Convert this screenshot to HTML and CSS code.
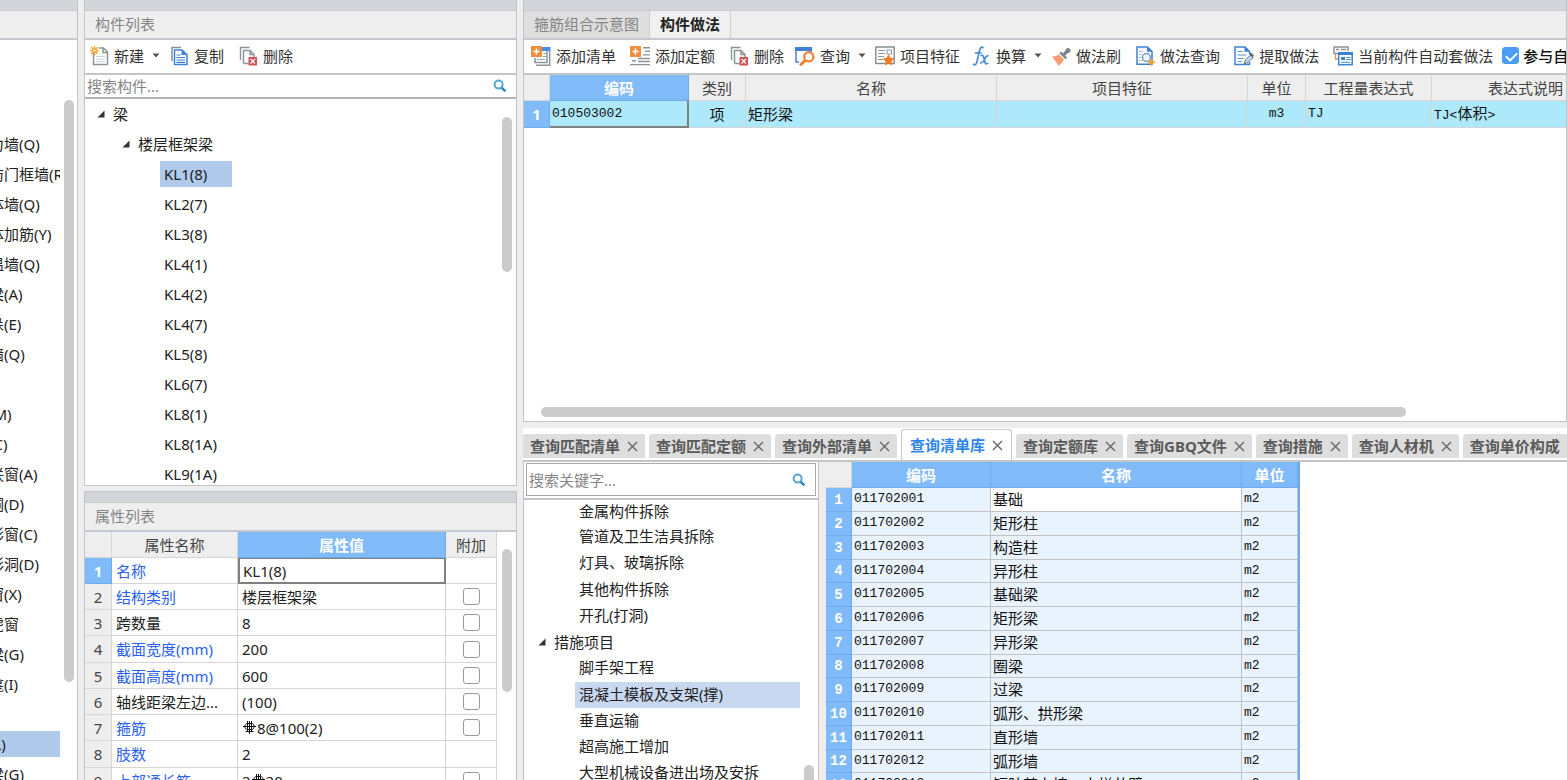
FILE: index.html
```html
<!DOCTYPE html>
<html lang="zh-CN">
<head>
<meta charset="utf-8">
<title>构件做法</title>
<link rel="stylesheet" href="styles.css">
</head>
<body>
<svg class="defs" aria-hidden="true">
  <symbol id="i-search" viewBox="0 0 14 14"><circle cx="5.6" cy="5.6" r="4" fill="#fff" stroke="#5aa5d2" stroke-width="2"/><path d="M8.6 8.6l3.8 3.8" stroke="#2f88c0" stroke-width="2.6"/></symbol>
  <symbol id="i-close" viewBox="0 0 11 11"><path d="M1 1l9 9M10 1l-9 9" stroke="#666" stroke-width="1.4" fill="none"/></symbol>
  <symbol id="i-tri" viewBox="0 0 8 8"><path d="M7.5 .5v7h-7z" fill="#333"/></symbol>
  <symbol id="i-caret" viewBox="0 0 8 5"><path d="M.5.5h7L4 4.5z" fill="#555"/></symbol>
  <symbol id="i-rebar" viewBox="0 0 13 13"><path d="M4.500 0v10.500M8.500 0v10.500M6.500 0v13M0 5.500h13M2.500 10.500h8" stroke="#111" fill="none"/><path d="M4.500 2.500C1 2.500 1 8.500 4.500 8.500M8.500 2.500c3.500 0 3.500 6 0 6M4.500 2.500h4M4.500 8.500h4" fill="none" stroke="#111"/></symbol>
  <symbol id="i-delete" viewBox="0 0 20 20"><path d="M2.500 14V1.500h9" fill="none" stroke="#8a9499" stroke-width="1.400"/><path d="M5.500 17.500V4.500h6.500l4 4v4M12 4.500v4h4M5.500 17.500h5" fill="none" stroke="#8a9499" stroke-width="1.500"/><rect x="10.500" y="11" width="8.500" height="8.500" fill="#d05358"/><path d="M12.500 13l4.500 4.500M17 13l-4.500 4.500" stroke="#fff" stroke-width="1.200"/></symbol>
</svg>
<div class="app">
  <aside class="col">
    <section class="panel modules">
      <div class="strip"></div>
      <div class="head"></div>
      <div class="scroller">
        <ul class="module-list">
          <li></li><li></li><li></li><li>剪力墙(Q)</li><li>人防门框墙(RF)</li><li>砌体墙(Q)</li><li>砌体加筋(Y)</li><li>保温墙(Q)</li><li>暗梁(A)</li><li>墙垛(E)</li><li>幕墙(Q)</li><li></li><li>门(M)</li><li>窗(C)</li><li>门联窗(A)</li><li>墙洞(D)</li><li>带形窗(C)</li><li>带形洞(D)</li><li>飘窗(X)</li><li>老虎窗</li><li>过梁(G)</li><li>壁龛(I)</li><li></li><li class="on">梁(L)</li><li>连梁(G)</li>
        </ul>
        <div class="vbar vbar-modules"></div>
      </div>
    </section>
  </aside>

  <div class="col middle">
    <section class="panel">
      <div class="strip"></div>
      <h2 class="head">构件列表</h2>
      <div class="toolbar">
        <button class="tool drop"><svg class="ico" viewBox="0 0 20 20"><path d="M4.500 7v11.500h14V6l-4-4H10" fill="#fff" stroke="#8a9499" stroke-width="1.500"/><path d="M14 2v4.500h4.500" fill="none" stroke="#8a9499" stroke-width="1.500"/><path d="M7 10.500h9M7 13h9M7 15.500h9" stroke="#ccd2d6"/><path d="M5.500 0v9M1 4.500h9M2.300 1.300l6.400 6.400M8.700 1.300L2.300 7.700" stroke="#f7a133" stroke-width="1.500"/><circle cx="5.500" cy="4.500" r="1.300" fill="#fff3c0"/></svg>新建<svg class="caret"><use href="#i-caret"/></svg></button>
        <button class="tool"><svg class="ico" viewBox="0 0 20 20"><path d="M3 15V1.500h9" fill="none" stroke="#7d93a8" stroke-width="1.500"/><path d="M5.500 4h7.500l5 4.500v10H5.500z" fill="#fff" stroke="#3d82d2" stroke-width="1.500"/><path d="M12.500 4v5H18z" fill="#3d82d2"/><path d="M7.500 9h4M7.500 11.500h8.500M7.500 14h8.500M7.500 16.300h8.500" stroke="#3d82d2" stroke-width="1.200"/></svg>复制</button>
        <button class="tool"><svg class="ico"><use href="#i-delete"/></svg>删除</button>
      </div>
      <label class="search"><input type="text" placeholder="搜索构件..." aria-label="搜索构件"><svg class="mag"><use href="#i-search"/></svg></label>
      <div class="scroller">
        <ul class="tree parts">
          <li class="lv0"><svg class="tri"><use href="#i-tri"/></svg>梁</li>
          <li class="lv1"><svg class="tri"><use href="#i-tri"/></svg>楼层框架梁</li>
          <li class="lv2"><span class="on">KL1(8)</span></li><li class="lv2"><span>KL2(7)</span></li><li class="lv2"><span>KL3(8)</span></li><li class="lv2"><span>KL4(1)</span></li><li class="lv2"><span>KL4(2)</span></li><li class="lv2"><span>KL4(7)</span></li><li class="lv2"><span>KL5(8)</span></li><li class="lv2"><span>KL6(7)</span></li><li class="lv2"><span>KL8(1)</span></li><li class="lv2"><span>KL8(1A)</span></li><li class="lv2"><span>KL9(1A)</span></li>
        </ul>
        <div class="vbar vbar-parts"></div>
      </div>
    </section>
    <section class="panel topped">
      <div class="strip"></div>
      <h2 class="head">属性列表</h2>
      <div class="scroller">
        <table class="props">
          <colgroup><col class="c-num"><col class="c-key"><col><col class="c-add"></colgroup>
          <thead><tr><th></th><th>属性名称</th><th class="sel">属性值</th><th>附加</th></tr></thead>
          <tbody>
            <tr><th class="sel">1</th><td class="link">名称</td><td class="focus">KL1(8)</td><td></td></tr>
            <tr><th>2</th><td class="link">结构类别</td><td>楼层框架梁</td><td class="tick"><input type="checkbox" aria-label="附加 结构类别"></td></tr>
            <tr><th>3</th><td>跨数量</td><td>8</td><td class="tick"><input type="checkbox" aria-label="附加 跨数量"></td></tr>
            <tr><th>4</th><td class="link">截面宽度(mm)</td><td>200</td><td class="tick"><input type="checkbox" aria-label="附加 截面宽度"></td></tr>
            <tr><th>5</th><td class="link">截面高度(mm)</td><td>600</td><td class="tick"><input type="checkbox" aria-label="附加 截面高度"></td></tr>
            <tr><th>6</th><td>轴线距梁左边...</td><td>(100)</td><td class="tick"><input type="checkbox" aria-label="附加 轴线距梁左边"></td></tr>
            <tr><th>7</th><td class="link">箍筋</td><td><svg class="rebar"><use href="#i-rebar"/></svg>8@100(2)</td><td class="tick"><input type="checkbox" aria-label="附加 箍筋"></td></tr>
            <tr><th>8</th><td class="link">肢数</td><td>2</td><td></td></tr>
            <tr><th>9</th><td class="link">上部通长筋</td><td>2<svg class="rebar"><use href="#i-rebar"/></svg>20</td><td class="tick"><input type="checkbox" aria-label="附加 上部通长筋"></td></tr>
          </tbody>
        </table>
        <div class="vbar vbar-props"></div>
      </div>
    </section>
  </div>

  <main class="col right">
    <section class="panel">
      <div class="strip"></div>
      <div class="head head-tabs"><button class="htab">箍筋组合示意图</button><button class="htab current">构件做法</button></div>
      <div class="toolbar">
        <button class="tool"><svg class="ico" viewBox="0 0 20 20"><path d="M10 1h9.500v4H10z" fill="#3f8fe8"/><path d="M18.700 5v14.200H5M4 12v4.500h12V5" fill="none" stroke="#8a9499" stroke-width="1.500"/><path d="M12 7.500h3M6 13.500h8M12 10.500h3" stroke="#9aa4a9"/><rect width="11" height="11" fill="#ee8f3f"/><path d="M5.500 2.500v6M2.500 5.500h6" stroke="#fff" stroke-width="1.500"/></svg>添加清单</button>
        <button class="tool"><svg class="ico" viewBox="0 0 20 20"><path d="M13 1.700h7M15 5.300h5M13 8.900h7M8 12.500h12M2 14.700h4M8 15.500h12M0 18.600h20" stroke="#8a9499" stroke-width="1.400"/><rect width="11" height="11" fill="#ee8f3f"/><path d="M5.500 2.500v6M2.500 5.500h6" stroke="#fff" stroke-width="1.500"/></svg>添加定额</button>
        <button class="tool"><svg class="ico"><use href="#i-delete"/></svg>删除</button>
        <button class="tool drop"><svg class="ico" viewBox="0 0 20 20"><path d="M0 1h17v4H0z" fill="#3f82d8"/><path d="M1 3v13h3M16 3v3" fill="none" stroke="#3f82d8" stroke-width="1.500"/><circle cx="13.800" cy="10.800" r="4.600" fill="#fff" stroke="#f08033" stroke-width="2.200"/><path d="M10.300 14.300L5 19.300" stroke="#f08033" stroke-width="3"/></svg>查询<svg class="caret"><use href="#i-caret"/></svg></button>
        <button class="tool"><svg class="ico" viewBox="0 0 20 20"><rect x=".8" y="1" width="18.400" height="16.500" fill="#fff" stroke="#7f898e" stroke-width="1.400"/><path d="M3 4.500h7M3 7.500h7M3 10.500h6M3 13.500h5" stroke="#8a9499" stroke-width="1.200"/><rect x="12" y="4" width="4.500" height="4" fill="none" stroke="#8a9499"/><path d="M13.500 8l1.800 3.800 4.200.6-3 2.900.7 4.200-3.700-2-3.700 2 .7-4.200-3-2.900 4.200-.6z" fill="#f07c22"/></svg>项目特征</button>
        <button class="tool drop"><svg class="ico" viewBox="0 0 20 20"><path d="M12.500 2.200C10.300-.2 9 2 8.300 5L6 15.500c-.7 3.300-2 4-4 2.500M3.800 7h7" fill="none" stroke="#4088d8" stroke-width="1.600"/><path d="M9.500 9.800c2.500-1.500 3 0 3.800 3.700s1.300 5.700 4 3.500M17.500 9.500c-2.500 0-3.500 3.200-4.500 4.800s-2 3.200-4 2.700" fill="none" stroke="#4088d8" stroke-width="1.600"/></svg>换算<svg class="caret"><use href="#i-caret"/></svg></button>
        <button class="tool"><svg class="ico" viewBox="0 0 20 20"><path d="M1 10c3 1 5-.5 7-1.500l5 5C11.500 16 10 18 7.500 19.700z" fill="#f99b73"/><path d="M8.300 7.200l1.800-1.800 6 6-1.800 1.800z" fill="#7b878c"/><path d="M12.500 9L16 5.500" stroke="#7b878c" stroke-width="3.200"/><circle cx="17" cy="4.500" r="2.500" fill="#7b878c"/></svg>做法刷</button>
        <button class="tool"><svg class="ico" viewBox="0 0 20 20"><path d="M2 1h10.500L17 5.500v12.800H2z" fill="#fff" stroke="#3d82d2" stroke-width="1.500"/><path d="M12 .5v5.300h5.500z" fill="#3d82d2"/><path d="M4 5.500h4M4 8.500h3M4 11.500h3M4 14.500h5" stroke="#a8bfd8"/><circle cx="11.500" cy="11.500" r="4" fill="#eef5ff" stroke="#7c9cd0" stroke-width="1.500"/><path d="M16.500 13l1 2.300 2.300 1-2.300 1-1 2.400-1-2.400-2.300-1 2.300-1z" fill="#f5a020" stroke="#f5a020"/></svg>做法查询</button>
        <button class="tool"><svg class="ico" viewBox="0 0 20 20"><path d="M15.500 16v2.500H1V1h10l4.500 4.500V8" fill="#fff" stroke="#3d82d2" stroke-width="1.500"/><path d="M10.500.5v5.300H16z" fill="#3d82d2"/><path d="M3.500 5.500h5M3.500 9h9M3.500 12.500h6M3.500 15.500h4" stroke="#5f93cf"/><path d="M10 18l1.500-4 5-5 2.500 2.500-5 5z" fill="#b9dff0" stroke="#607078"/><path d="M15 8l2-1.500 3 3-1.500 2z" fill="#606b70"/></svg>提取做法</button>
        <button class="tool"><svg class="ico" viewBox="0 0 20 20"><path d="M5 7.500H1V1h14v4M3 3.500h3M8 3.500h5" fill="none" stroke="#8a9499" stroke-width="1.500"/><path d="M2.500 8v5h3" fill="none" stroke="#ef8a45" stroke-width="1.300"/><rect x="5.700" y="6.700" width="13.500" height="12" fill="#fff" stroke="#3d82d2" stroke-width="1.500"/><path d="M6 8h13" stroke="#3d82d2" stroke-width="2"/><rect x="8" y="11" width="4" height="3" fill="#3d82d2"/><path d="M13.500 11.500h4M13.500 13.500h4M8 16.300h9" stroke="#3d82d2"/></svg>当前构件自动套做法</button>
        <label class="auto"><input type="checkbox" checked>参与自动套</label>
      </div>
      <div class="sheet">
        <table class="method">
          <colgroup><col class="m-num"><col class="m-code"><col class="m-kind"><col class="m-name"><col class="m-name"><col class="m-unit"><col class="m-expr"><col class="m-desc"></colgroup>
          <thead><tr><th></th><th class="sel">编码</th><th>类别</th><th>名称</th><th>项目特征</th><th>单位</th><th>工程量表达式</th><th>表达式说明</th></tr></thead>
          <tbody><tr><th class="sel">1</th><td class="mono focus">010503002</td><td class="mid">项</td><td>矩形梁</td><td></td><td class="mono mid">m3</td><td class="mono">TJ</td><td class="mono">TJ&lt;<span class="cjk">体积</span>&gt;</td></tr></tbody>
        </table>
      </div>
      <div class="hbar"></div>
    </section>

    <section class="query">
      <nav class="qtabs">
        <div class="qtab"><button>查询匹配清单</button><button class="x" aria-label="关闭"><svg><use href="#i-close"/></svg></button></div>
        <div class="qtab"><button>查询匹配定额</button><button class="x" aria-label="关闭"><svg><use href="#i-close"/></svg></button></div>
        <div class="qtab"><button>查询外部清单</button><button class="x" aria-label="关闭"><svg><use href="#i-close"/></svg></button></div>
        <div class="qtab current"><button>查询清单库</button><button class="x" aria-label="关闭"><svg><use href="#i-close"/></svg></button></div>
        <div class="qtab"><button>查询定额库</button><button class="x" aria-label="关闭"><svg><use href="#i-close"/></svg></button></div>
        <div class="qtab"><button>查询GBQ文件</button><button class="x" aria-label="关闭"><svg><use href="#i-close"/></svg></button></div>
        <div class="qtab"><button>查询措施</button><button class="x" aria-label="关闭"><svg><use href="#i-close"/></svg></button></div>
        <div class="qtab"><button>查询人材机</button><button class="x" aria-label="关闭"><svg><use href="#i-close"/></svg></button></div>
        <div class="qtab"><button>查询单价构成</button><button class="x" aria-label="关闭"><svg><use href="#i-close"/></svg></button></div>
      </nav>
      <div class="qbody">
        <div class="lib">
          <div class="lib-search"><label class="search boxed"><input type="text" placeholder="搜索关键字..." aria-label="搜索关键字"><svg class="mag"><use href="#i-search"/></svg></label></div>
          <div class="scroller">
            <ul class="tree chapters">
              <li><span>金属构件拆除</span></li><li><span>管道及卫生洁具拆除</span></li><li><span>灯具、玻璃拆除</span></li><li><span>其他构件拆除</span></li><li><span>开孔(打洞)</span></li>
              <li class="group"><svg class="tri"><use href="#i-tri"/></svg>措施项目</li>
              <li><span>脚手架工程</span></li><li><span class="on">混凝土模板及支架(撑)</span></li><li><span>垂直运输</span></li><li><span>超高施工增加</span></li><li><span>大型机械设备进出场及安拆</span></li>
            </ul>
            <div class="vbar vbar-lib"></div>
          </div>
        </div>
        <div class="result">
          <table class="items">
            <colgroup><col class="m-num"><col class="m-code"><col class="m-name"><col class="i-unit"></colgroup>
            <thead><tr><th class="corner"></th><th>编码</th><th>名称</th><th>单位</th></tr></thead>
            <tbody>
              <tr><th>1</th><td class="mono">011702001</td><td class="cur">基础</td><td class="mono">m2</td></tr>
              <tr><th>2</th><td class="mono">011702002</td><td>矩形柱</td><td class="mono">m2</td></tr>
              <tr><th>3</th><td class="mono">011702003</td><td>构造柱</td><td class="mono">m2</td></tr>
              <tr><th>4</th><td class="mono">011702004</td><td>异形柱</td><td class="mono">m2</td></tr>
              <tr><th>5</th><td class="mono">011702005</td><td>基础梁</td><td class="mono">m2</td></tr>
              <tr><th>6</th><td class="mono">011702006</td><td>矩形梁</td><td class="mono">m2</td></tr>
              <tr><th>7</th><td class="mono">011702007</td><td>异形梁</td><td class="mono">m2</td></tr>
              <tr><th>8</th><td class="mono">011702008</td><td>圈梁</td><td class="mono">m2</td></tr>
              <tr><th>9</th><td class="mono">011702009</td><td>过梁</td><td class="mono">m2</td></tr>
              <tr><th>10</th><td class="mono">011702010</td><td>弧形、拱形梁</td><td class="mono">m2</td></tr>
              <tr><th>11</th><td class="mono">011702011</td><td>直形墙</td><td class="mono">m2</td></tr>
              <tr><th>12</th><td class="mono">011702012</td><td>弧形墙</td><td class="mono">m2</td></tr>
              <tr><th>13</th><td class="mono">011702013</td><td>短肢剪力墙、电梯井壁</td><td class="mono">m2</td></tr>
            </tbody>
          </table>
        </div>
      </div>
    </section>
  </main>
</div>
</body>
</html>
```
FILE: styles.css
```css
* { box-sizing: border-box; }
body {
  margin: 0;
  overflow: hidden;
  background: #eee;
  color: #222;
  font: 15px/20px "Noto Sans", "Noto Sans CJK SC", sans-serif;
}
button {
  margin: 0;
  padding: 0;
  border: 0;
  background: none;
  color: inherit;
  font: inherit;
  white-space: nowrap;
}
ul { list-style: none; margin: 0; padding: 0; }
.defs { position: absolute; width: 0; height: 0; }

.app {
  display: grid;
  grid-template-columns: 78px 433px minmax(0, 1fr);
  gap: 6px;
  height: 100vh;
}
.col { display: grid; min-width: 0; min-height: 0; overflow: hidden; }
.middle { grid-template-rows: minmax(0, 486fr) minmax(0, 289fr); gap: 5px; }
.right { grid-template-rows: minmax(0, 422fr) minmax(0, 352fr); gap: 6px; }

.panel {
  display: flex;
  flex-direction: column;
  min-width: 0;
  min-height: 0;
  overflow: hidden;
  background: #fff;
  border: solid #c2c4c8;
  border-width: 0 1px 1px;
}
.modules { border-width: 0 1px 0 0; }
.topped { border-width: 1px 1px 0; }
.strip { flex: none; height: 11px; background: #d3d5db; border-bottom: 1px solid #c8cbd0; }
.head {
  flex: none;
  height: 29px;
  margin: 0;
  padding: 3px 10px;
  background: #eee;
  border-bottom: 2px solid #c5c8cc;
  color: #858585;
  font-size: 15px;
  font-weight: 400;
}
.head-tabs { display: flex; padding: 0; }
.htab { padding: 0 10px 2px; background: #dedede; border-right: 1px solid #cfcfcf; }
.htab.current { background: #f0f0f0; color: #222; font-weight: 700; }

.toolbar {
  display: flex;
  flex: none;
  align-items: center;
  height: 35px;
  padding-bottom: 2px;
  background: #fff;
  border-bottom: 2px solid #c3c5c9;
}
.tool { display: flex; flex: none; align-items: center; gap: 5px; padding: 0 7px; color: #333; }
.tool.drop { padding: 0 2px 0 4px; }
.ico { flex: none; width: 20px; height: 20px; }
.caret { flex: none; width: 8px; height: 5px; margin-left: 3px; }
.auto { display: flex; flex: none; align-items: center; gap: 4px; padding-left: 2px; color: #111; font-weight: 500; white-space: nowrap; }

input[type="checkbox"] {
  appearance: none;
  width: 17px;
  height: 17px;
  margin: 0;
  border: 1px solid #999;
  border-radius: 3px;
  background: #fff;
}
input[type="checkbox"]:checked {
  position: relative;
  border-color: #4a9df5;
  background: #4a9df5;
}
input[type="checkbox"]:checked::after {
  content: "";
  position: absolute;
  left: 5px;
  top: 2px;
  width: 5px;
  height: 9px;
  border: solid #fff;
  border-width: 0 2px 2px 0;
  transform: rotate(45deg);
}

.search {
  display: flex;
  flex: none;
  align-items: center;
  height: 24px;
  padding: 0 9px 0 2px;
  background: #fff;
  border-bottom: 2px solid #b4b4b4;
}
.search input {
  flex: 1;
  min-width: 0;
  padding: 0;
  border: 0;
  outline: 0;
  background: none;
  color: #333;
  font: inherit;
}
.search input::placeholder { color: #858585; opacity: 1; }
.mag { width: 14px; height: 14px; }

.scroller { display: flex; flex: 1; min-height: 0; overflow: hidden; }
.vbar { flex: none; width: 10px; border-radius: 5px; background: #cbcbcb; }
.vbar-modules { height: 582px; margin: 60px 3px 0 4px; }
.vbar-parts { height: 155px; margin: 18px 4px 0 0; }
.vbar-props { height: 143px; margin: 17px 4px 0 5px; }
.vbar-lib { height: 155px; margin: 265px 4px 0 0; }

.module-list { flex: 1; min-width: 0; overflow: hidden; }
.module-list li {
  height: 26px;
  margin: 2px 0 4px -26px;
  line-height: 26px;
  white-space: nowrap;
}
.module-list li:first-child { margin-top: 1px; }
.on { background: #b0caec; }

.tree { flex: 1; min-width: 0; white-space: nowrap; }
.tree li { display: flex; align-items: center; }
.tri { flex: none; width: 8px; height: 8px; margin-right: 8px; }
.parts li { height: 30px; }
.parts .lv0 { padding-left: 12px; }
.parts .lv1 { padding-left: 37px; }
.parts .lv2 { padding-left: 75px; }
.parts .lv2 span { min-width: 72px; padding: 3px 4px; }

table { border-collapse: separate; border-spacing: 0; table-layout: fixed; }
th, td {
  overflow: hidden;
  padding: 0 4px;
  border: solid #d5d5d5;
  border-width: 0 1px 1px 0;
  text-align: left;
  white-space: nowrap;
}
th { padding: 0; background: #eee; color: #444; font-weight: 400; text-align: center; }
th.sel { background: #80baf9; border-color: #6dabee; color: #fff; font-weight: 700; }
td.focus { border: solid #808080; border-width: 0 2px 2px 0; }

.props { flex: 1; min-width: 0; height: max-content; }
.props tr { height: 26px; }
.props tbody tr:nth-child(4n) { height: 27px; }
.props .c-num { width: 27px; }
.props .c-key { width: 126px; }
.props .c-add { width: 51px; }
.props td.focus { border-width: 1px 2px 2px; padding-left: 3px; }
.link { color: #2b61f0; }
.tick { text-align: center; line-height: 0; }
.rebar { width: 13px; height: 13px; margin: 0 1px; vertical-align: 0; }

.sheet { flex: 1; min-height: 0; overflow: hidden; }
.method { width: 1096px; }
.method tr { height: 26px; }
.method tbody tr { height: 27px; }
.method td { background: #aee8fb; color: #111; }
.method td, .items td { padding: 0 2px; }
.m-num { width: 26px; }
.m-code { width: 139px; }
.m-kind { width: 57px; }
.m-name { width: 251px; }
.m-unit { width: 58px; }
.i-unit { width: 56px; }
.m-expr { width: 126px; }
.m-desc { width: 188px; }
.mono { font-family: "Liberation Mono", monospace; font-size: 13px; }
.cjk { font-family: "Noto Sans CJK SC", sans-serif; font-size: 15px; }
.method td.mid { text-align: center; }
.hbar { flex: none; width: 83%; height: 10px; margin: 0 0 4px 17px; border-radius: 5px; background: #cbcbcb; }

.query { display: flex; flex-direction: column; min-width: 0; min-height: 0; background: #fff; overflow: hidden; }
.qtabs {
  display: flex;
  flex: none;
  align-items: center;
  gap: 4px;
  height: 34px;
  border-bottom: 2px solid #c3c5c9;
}
.qtab {
  display: flex;
  flex: none;
  align-items: center;
  gap: 7px;
  height: 24px;
  margin-top: 4px;
  padding: 0 7px;
  background: #dedede;
  border-radius: 3px 3px 0 0;
  color: #5a5a5a;
  font-weight: 700;
}
.qtab.current {
  align-self: stretch;
  height: auto;
  margin-top: 1px;
  padding: 0 8px;
  background: #fff;
  border: solid #c5cad2;
  border-width: 1px 1px 0;
  color: #2f86ea;
}
.x { width: 11px; height: 11px; line-height: 0; }
.x svg { width: 11px; height: 11px; }

.qbody { display: grid; grid-template-columns: 296px minmax(0, 1fr); gap: 7px; flex: 1; min-height: 0; background: #eee; }
.lib { display: flex; flex-direction: column; min-height: 0; background: #fff; border: solid #c2c4c8; border-width: 0 1px; }
.lib-search { padding: 1px 2px 2px; border-bottom: 2px solid #c3c5c9; }
.search.boxed { height: 33px; border: 1px solid #aaa; }
.chapters li { height: 26px; padding-left: 51px; }
.chapters li:first-child { height: 24px; }
.chapters li:nth-child(4n) { height: 27px; }
.chapters .group { padding-left: 14px; }
.chapters span { min-width: 225px; height: 26px; padding: 2px 4px; }
.chapters .on { background: #c8d8f0; }

.result { min-width: 0; overflow: hidden; background: #fff; }
.items { width: 474px; border-right: 2px solid #6dabee; }
.items tr { height: 26px; }
.items tbody tr { height: 24px; }
.items tbody tr:nth-child(4n) { height: 23px; }
.items th { background: #80baf9; border-color: #6dabee; color: #fff; font-weight: 700; }
.items tbody th { font-family: "Liberation Mono", monospace; font-size: 14px; }
.items .corner { background: #eee; border-color: #d5d5d5; }
.items td { background: #e9f3fe; border-color: #c0c2c5; color: #111; line-height: 22px; vertical-align: top; }
.items .cur { background: #fff; }
```
